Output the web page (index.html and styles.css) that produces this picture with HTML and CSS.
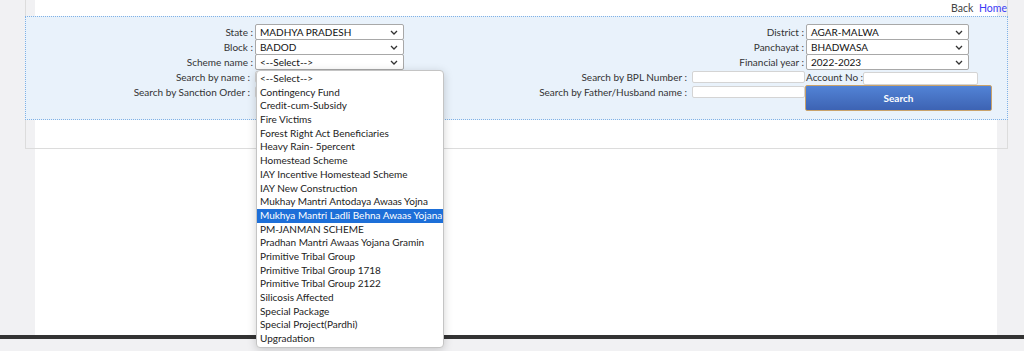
FILE: index.html
```html
<!DOCTYPE html>
<html lang="en">

<head>
    <meta charset="UTF-8">
    <title>Search Beneficiary</title>
    <link rel="stylesheet" href="styles.css">
</head>

<body>
    <div class="page">
        <div class="box">
            <div class="toplinks">
                <a class="back">Back</a>
                <a class="home">Home</a>
            </div>

            <div class="panel">
                <!-- location filters -->
                <div class="grid-top">
                    <label>State :</label>
                    <div class="sel">MADHYA PRADESH<svg width="8" height="5" viewBox="0 0 8 5"><polyline points="1,1 4,4 7,1" fill="none" stroke="#333" stroke-width="1.3"/></svg></div>
                    <label>District :</label>
                    <div class="sel">AGAR-MALWA<svg width="8" height="5" viewBox="0 0 8 5"><polyline points="1,1 4,4 7,1" fill="none" stroke="#333" stroke-width="1.3"/></svg></div>

                    <label>Block :</label>
                    <div class="sel">BADOD<svg width="8" height="5" viewBox="0 0 8 5"><polyline points="1,1 4,4 7,1" fill="none" stroke="#333" stroke-width="1.3"/></svg></div>
                    <label>Panchayat :</label>
                    <div class="sel">BHADWASA<svg width="8" height="5" viewBox="0 0 8 5"><polyline points="1,1 4,4 7,1" fill="none" stroke="#333" stroke-width="1.3"/></svg></div>

                    <label>Scheme name :</label>
                    <div class="sel">&lt;--Select--&gt;<svg width="8" height="5" viewBox="0 0 8 5"><polyline points="1,1 4,4 7,1" fill="none" stroke="#333" stroke-width="1.3"/></svg></div>
                    <label>Financial year :</label>
                    <div class="sel">2022-2023<svg width="8" height="5" viewBox="0 0 8 5"><polyline points="1,1 4,4 7,1" fill="none" stroke="#333" stroke-width="1.3"/></svg></div>
                </div>

                <!-- text search -->
                <div class="grid-bottom">
                    <label class="lbl">Search by name :</label>
                    <input type="text" class="txt">
                    <label class="lbl">Search by BPL Number :</label>
                    <input type="text" class="txt bpl">
                    <label class="lbl acc">Account No :</label>
                    <input type="text" class="txt account">

                    <label class="lbl r2 c1">Search by Sanction Order :</label>
                    <input type="text" class="txt r2 c2">
                    <label class="lbl r2 c3">Search by Father/Husband name :</label>
                    <input type="text" class="txt r2 c4">
                    <button class="search">Search</button>
                </div>
            </div>
        </div>
    </div>
    <div class="footer-line"></div>

    <!-- open scheme list -->
    <div class="dropdown">
        <div>&lt;--Select--&gt;</div>
        <div>Contingency Fund</div>
        <div>Credit-cum-Subsidy</div>
        <div>Fire Victims</div>
        <div>Forest Right Act Beneficiaries</div>
        <div>Heavy Rain- 5percent</div>
        <div>Homestead Scheme</div>
        <div>IAY Incentive Homestead Scheme</div>
        <div>IAY New Construction</div>
        <div>Mukhay Mantri Antodaya Awaas Yojna</div>
        <div class="active">Mukhya Mantri Ladli Behna Awaas Yojana</div>
        <div>PM-JANMAN SCHEME</div>
        <div>Pradhan Mantri Awaas Yojana Gramin</div>
        <div>Primitive Tribal Group</div>
        <div>Primitive Tribal Group 1718</div>
        <div>Primitive Tribal Group 2122</div>
        <div>Silicosis Affected</div>
        <div>Special Package</div>
        <div>Special Project(Pardhi)</div>
        <div>Upgradation</div>
    </div>
</body>

</html>
```
FILE: styles.css
```css
body {
    margin: 0;
    background-color: #f1f1f3;
    font-family: Lato, "Liberation Sans", sans-serif;
    font-size: 10px;
    color: #333;
}

.page {
    margin: 0 27px 0 35px;
    height: 335px;
    background-color: #fff;
}

.box {
    margin-left: -10px;
    width: 981px;
    height: 148px;
    border: 1px solid #dcdcdc;
    border-top: none;
}

.toplinks {
    height: 16px;
    line-height: 16px;
    text-align: right;
    font-size: 10.5px;
}

.toplinks a {
    margin-left: 3px;
}

.back {
    color: #444;
}

.home {
    color: #3b3bf5;
}

.panel {
    margin: 0 -1px;
    border: 1px dotted #7fb1e6;
    background-color: #e9f2fb;
    padding: 7px 0 7px 0;
    height: 88px;
}

.grid-top {
    display: grid;
    grid-template-columns: 229px 149px 1fr 163px;
    grid-auto-rows: 15px;
    padding-right: 38px;
}

.grid-top label {
    text-align: right;
    line-height: 16px;
    padding-right: 2px;
}

.sel {
    height: 14px;
    line-height: 14px;
    border: 1px solid #a8a8a8;
    border-radius: 2px;
    background-color: #fff;
    padding-left: 4px;
    color: #111;
    display: flex;
    justify-content: space-between;
    align-items: center;
}

.sel svg {
    margin-right: 5px;
}

.grid-bottom {
    display: grid;
    grid-template-columns: 229px 150px 287px 113px 58px 115px 1fr;
    grid-template-rows: 14px 26px;
    margin-top: 2px;
}

.lbl {
    text-align: right;
    line-height: 13px;
    padding-right: 5px;
    white-space: nowrap;
}

.lbl.acc {
    text-align: left;
    padding-left: 1px;
}

.txt {
    box-sizing: border-box;
    height: 12px;
    width: 100%;
    border: 1px solid #d4d4d4;
    border-radius: 2px;
    background-color: #fff;
    padding: 0;
    margin: 0;
}

.txt.account {
    grid-column: 6 / span 2;
    width: 115px;
    height: 13px;
    margin-top: 1px;
}

/* second row, placed explicitly */
.r2 {
    grid-row: 2;
    margin-top: 1px;
}

.c1 { grid-column: 1; }
.c2 { grid-column: 2; }
.c3 { grid-column: 3; }
.c4 { grid-column: 4; }

.search {
    grid-row: 2;
    grid-column: 5 / span 3;
    width: 187px;
    height: 26px;
    border: 1px solid #c9a26a;
    border-radius: 2px;
    background: linear-gradient(#5283d6, #3d63b3);
    color: #fff;
    font-family: Lato, "Liberation Sans", sans-serif;
    font-size: 10px;
    font-weight: bold;
    cursor: pointer;
}

.footer-line {
    height: 4px;
    background-color: #333;
}

.dropdown {
    position: absolute;
    left: 256px;
    top: 70px;
    width: 186px;
    padding: 1px 0;
    background-color: #fff;
    border: 1px solid #c4c4c4;
    border-radius: 4px;
    box-shadow: 0 2px 10px rgba(0, 0, 0, 0.18);
    color: #222;
}

.dropdown div {
    height: 13.7px;
    line-height: 13.7px;
    padding-left: 3px;
    white-space: nowrap;
}

.dropdown .active {
    background-color: #1d6fd8;
    color: #fff;
}
```
